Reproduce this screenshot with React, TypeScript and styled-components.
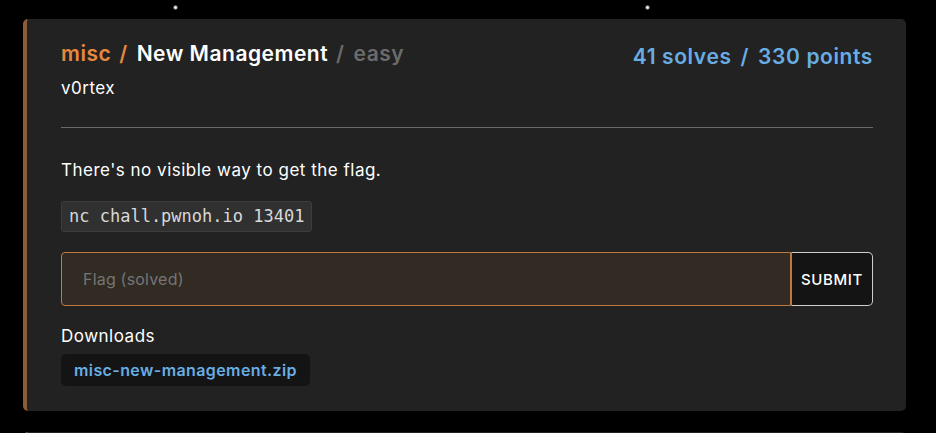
import React from 'react';
import styled, { createGlobalStyle } from 'styled-components';

const GlobalStyle = createGlobalStyle`
  html, body {
    margin: 0;
    padding: 0;
    background: #000;
    overflow: hidden;
  }
  body {
    font-family: Inter, "Noto Sans", sans-serif;
    color: #fff;
  }
`;

const Page = styled.div`
  position: relative;
  min-height: 433px;
  padding: 19px 30px 0 23px;
  box-sizing: border-box;
`;

const Star = styled.div`
  position: absolute;
  width: 5px;
  height: 5px;
  border-radius: 50%;
  background: radial-gradient(circle, #fff 0%, #bbb 40%, rgba(120, 120, 120, 0) 75%);
`;

const ChallengeCard = styled.div`
  position: relative;
  background-color: #222222;
  border-left: 4px solid #8c5c38;
  border-radius: 5px;
  box-shadow: 0 2px 8px rgba(0, 0, 0, 0.6);
  padding: 22px 33px 25px 34px;
  margin-bottom: 21px;
`;

const CardHeader = styled.div`
  display: flex;
  justify-content: space-between;
  align-items: flex-start;
`;

const TitleBlock = styled.div`
  display: flex;
  flex-direction: column;
`;

const Title = styled.div`
  font-size: 21px;
  font-weight: 600;
  line-height: 24px;
  letter-spacing: 0.5px;
  white-space: nowrap;
  margin-top: 1px;
`;

const Slash = styled.span<{ tone: string }>`
  color: ${(props) => props.tone};
  margin: 0 9px 0 8px;
`;

const Category = styled.span`
  color: #e8883e;
`;

const Name = styled.span`
  color: #ffffff;
`;

const Difficulty = styled.span`
  color: #6b6b6b;
`;

const Author = styled.div`
  font-size: 17px;
  line-height: 24px;
  letter-spacing: 0.5px;
  margin-top: 10px;
  color: #fff;
`;

const Stats = styled.div`
  font-size: 21px;
  font-weight: 600;
  line-height: 24px;
  margin-top: 4px;
  color: #68ade3;
  letter-spacing: 0.6px;
  white-space: nowrap;
`;

const StatsSlash = styled.span`
  margin: 0 9px;
`;

const Divider = styled.hr`
  border: none;
  border-top: 1px solid #6a6a6a;
  margin: 27px 0 0;
`;

const Description = styled.p`
  font-size: 17px;
  line-height: 24px;
  letter-spacing: 0.5px;
  margin: 30px 0 0;
`;

const CodeBox = styled.code`
  display: block;
  width: fit-content;
  margin-top: 19px;
  padding: 4px 7px;
  font-family: "DejaVu Sans Mono", "Liberation Mono", monospace;
  font-size: 17px;
  line-height: 21px;
  color: #d8d8d8;
  background: #303030;
  border: 1px solid #3d3d3d;
  border-radius: 3px;
`;

const FlagForm = styled.form`
  display: flex;
  margin-top: 20px;
  height: 54px;
`;

const FlagInput = styled.input`
  flex: 1;
  box-sizing: border-box;
  height: 100%;
  background: #312b24;
  border: 1px solid #c07a3e;
  border-radius: 4px 0 0 4px;
  padding: 0 21px;
  font-family: inherit;
  font-size: 16px;
  letter-spacing: 0.2px;
  color: #fff;
  outline: none;

  ::placeholder {
    color: #777;
  }
`;

const SubmitButton = styled.button`
  box-sizing: border-box;
  height: 100%;
  width: 82px;
  background: #141414;
  border: 1px solid #cfcfcf;
  border-left-color: #c07a3e;
  border-radius: 0 5px 5px 0;
  color: #fff;
  font-family: inherit;
  font-size: 15px;
  font-weight: 500;
  letter-spacing: 0.6px;
  cursor: pointer;
`;

const SectionLabel = styled.div`
  font-size: 17px;
  line-height: 24px;
  letter-spacing: 0.5px;
  margin-top: 18px;
`;

const DownloadList = styled.div`
  display: flex;
  gap: 8px;
  margin-top: 6px;
`;

const DownloadChip = styled.a`
  display: inline-block;
  background: #141414;
  border-radius: 5px;
  padding: 5px 13px;
  font-size: 16px;
  font-weight: 600;
  line-height: 22px;
  letter-spacing: 0.4px;
  color: #68ade3;
  text-decoration: none;
`;

export default function App() {
  return (
    <>
      <GlobalStyle />
      <Page>
        <Star style={{ left: 173, top: 5 }} />
        <Star style={{ left: 645, top: 5 }} />
        <ChallengeCard>
          <CardHeader>
            <TitleBlock>
              <Title>
                <Category>misc</Category>
                <Slash tone="#e8883e">/</Slash>
                <Name>New Management</Name>
                <Slash tone="#6b6b6b">/</Slash>
                <Difficulty>easy</Difficulty>
              </Title>
              <Author>v0rtex</Author>
            </TitleBlock>
            <Stats>
              41 solves<StatsSlash>/</StatsSlash>330 points
            </Stats>
          </CardHeader>
          <Divider />
          <Description>There's no visible way to get the flag.</Description>
          <CodeBox>nc chall.pwnoh.io 13401</CodeBox>
          <FlagForm onSubmit={(e) => e.preventDefault()}>
            <FlagInput placeholder="Flag (solved)" />
            <SubmitButton type="submit">SUBMIT</SubmitButton>
          </FlagForm>
          <SectionLabel>Downloads</SectionLabel>
          <DownloadList>
            <DownloadChip href="#">misc-new-management.zip</DownloadChip>
          </DownloadList>
        </ChallengeCard>
        <ChallengeCard />
      </Page>
    </>
  );
}
